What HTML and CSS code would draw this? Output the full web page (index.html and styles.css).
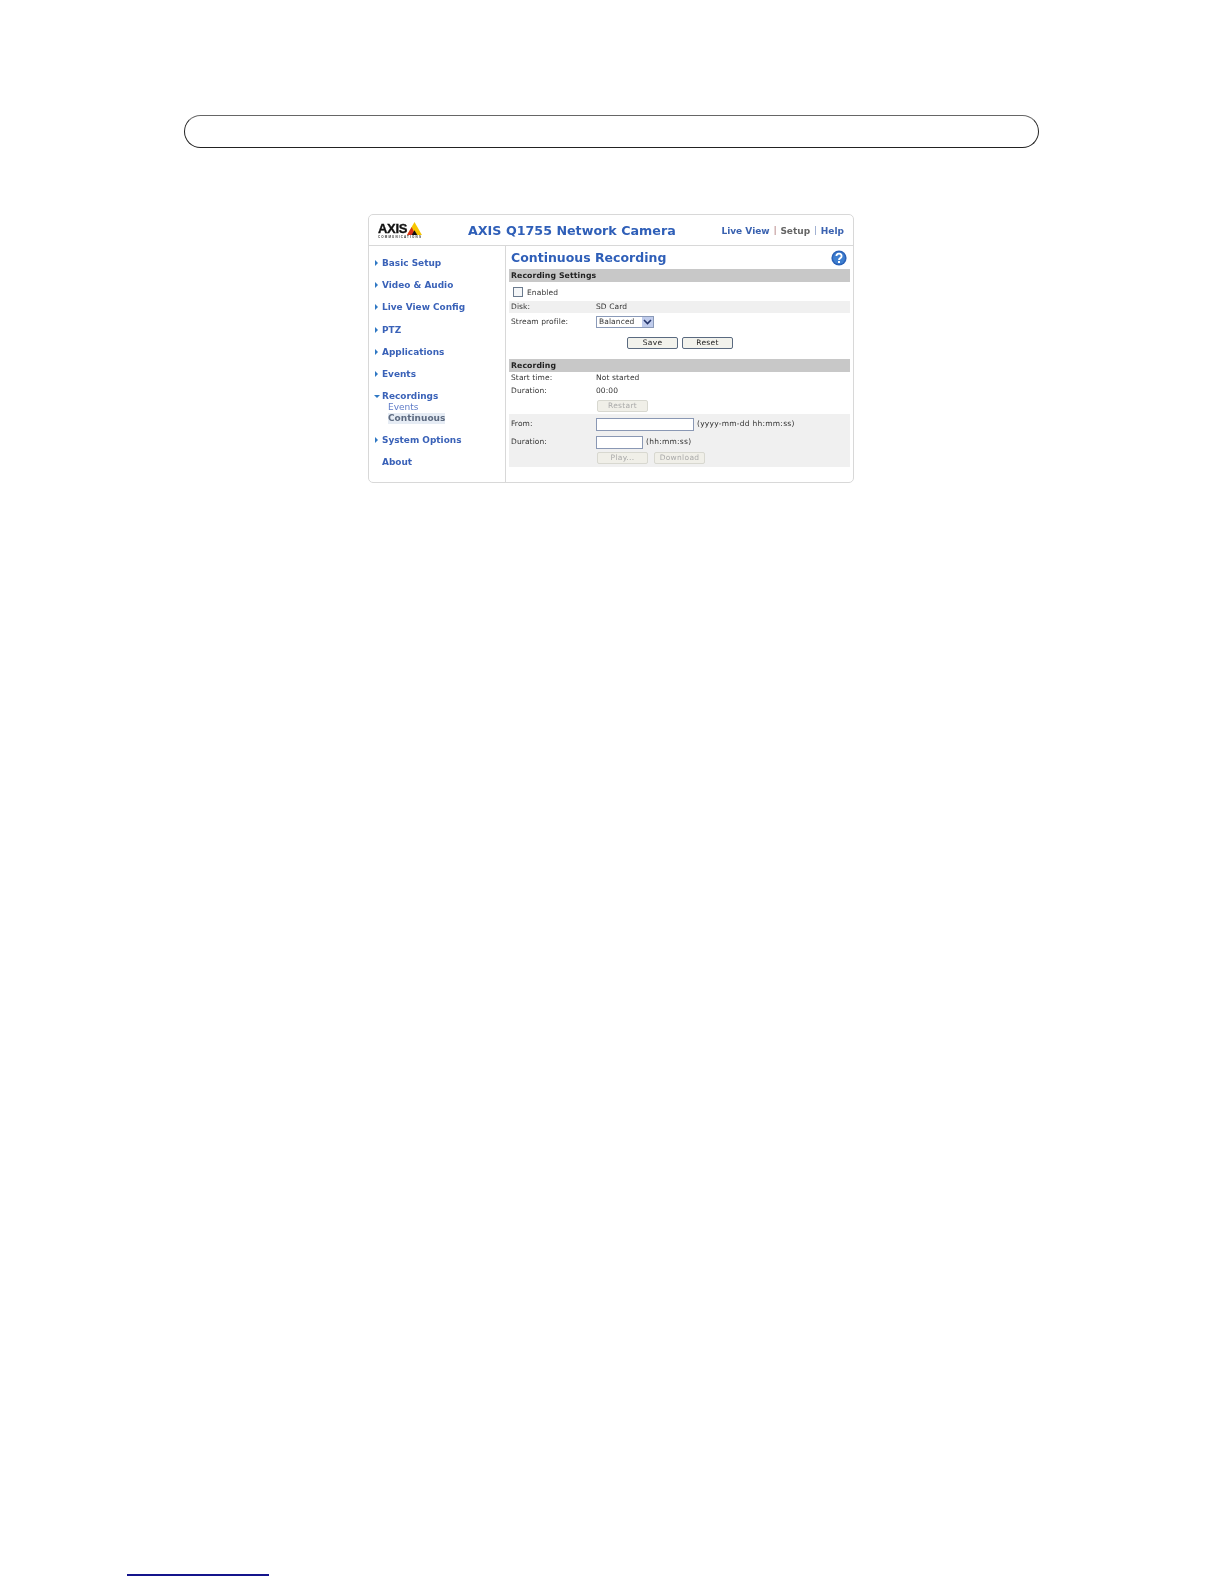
FILE: index.html
```html
<!DOCTYPE html>
<html lang="en">
<head>
<meta charset="utf-8">
<title>AXIS Q1755 Network Camera</title>
<link rel="stylesheet" href="styles.css">
</head>
<body>
<div class="pill"></div>
<div class="frame">
  <header class="top">
    <div class="logo">
      <div class="logo-main"><span class="axis">AXIS</span>
        <svg class="tri" viewBox="0 0 16 14" width="15" height="13"><polygon points="8,0 16,14 0,14" fill="#f7c600"/><polygon points="5,5.5 9,14 0,14" fill="#d8301c"/><polygon points="8,9 11,14 5,14" fill="#111"/></svg>
      </div>
      <div class="comm">COMMUNICATIONS</div>
    </div>
    <h1 class="product">AXIS Q1755 Network Camera</h1>
    <nav class="toplinks"><a class="tl">Live View</a><span class="sep">|</span><a class="tl cur">Setup</a><span class="sep">|</span><a class="tl">Help</a></nav>
  </header>
  <div class="body">
    <aside class="side">
      <div class="item"><i class="ar"></i>Basic Setup</div>
      <div class="item"><i class="ar"></i>Video &amp; Audio</div>
      <div class="item"><i class="ar"></i>Live View Config</div>
      <div class="item"><i class="ar"></i>PTZ</div>
      <div class="item"><i class="ar"></i>Applications</div>
      <div class="item"><i class="ar"></i>Events</div>
      <div class="item open"><i class="ar down"></i>Recordings</div>
      <div class="sub">Events</div>
      <div class="sub on"><span>Continuous</span></div>
      <div class="item after"><i class="ar"></i>System Options</div>
      <div class="item"><i class="ar none"></i>About</div>
    </aside>
    <main class="main">
      <div class="title-row">
        <h2 class="title">Continuous Recording</h2>
        <svg class="help" viewBox="0 0 16 16" width="16" height="16"><circle cx="8" cy="8" r="7.6" fill="#2a62b8"/><circle cx="8" cy="8" r="6" fill="#3f7fd0"/><path d="M5.4 6a2.6 2.4 0 1 1 3.9 2.1c-.9.6-1.3 1-1.3 2" fill="none" stroke="#fff" stroke-width="1.9"/><rect x="7" y="11" width="2" height="2" fill="#fff"/></svg>
      </div>
      <div class="bar">Recording Settings</div>
      <div class="row check"><span class="box"></span><span>Enabled</span></div>
      <div class="row shade"><span class="lab">Disk:</span><span>SD Card</span></div>
      <div class="row sel"><span class="lab">Stream profile:</span>
        <span class="select"><span class="sv">Balanced</span><span class="sa"><svg viewBox="0 0 9 6" width="9" height="6"><path d="M1 1l3.5 3.5L8 1" fill="none" stroke="#24346a" stroke-width="1.6"/></svg></span></span></div>
      <div class="btns"><span class="btn">Save</span><span class="btn">Reset</span></div>
      <div class="bar second">Recording</div>
      <div class="row t"><span class="lab">Start time:</span><span>Not started</span></div>
      <div class="row t"><span class="lab">Duration:</span><span>00:00</span></div>
      <div class="row act"><span class="lab"></span><span class="btn off">Restart</span></div>
      <div class="panel">
        <div class="row f1"><span class="lab">From:</span><span class="inp long"></span><span class="hint">(yyyy-mm-dd hh:mm:ss)</span></div>
        <div class="row f2"><span class="lab">Duration:</span><span class="inp short"></span><span class="hint">(hh:mm:ss)</span></div>
        <div class="row f3"><span class="lab"></span><span class="btn off">Play...</span><span class="btn off">Download</span></div>
      </div>
    </main>
  </div>
</div>
<div class="foot"></div>
</body>
</html>
```
FILE: styles.css
```css
html, body { margin: 0; padding: 0; background: #fff; }
body { width: 1224px; height: 1584px; overflow: hidden; font-family: "DejaVu Sans", Verdana, sans-serif; color: #333; }
.pill { box-sizing: border-box; width: 855px; height: 33px; margin: 115px 0 0 184px; border: 1px solid #222; border-top-color: #666; border-radius: 17px; }
.frame { box-sizing: border-box; width: 486px; height: 269px; margin: 66px 0 0 368px; border: 1px solid #d8d8d8; border-radius: 5px; filter: blur(.35px); }
.top { display: flex; align-items: center; height: 30px; border-bottom: 1px solid #d8d8d8; }
.logo { width: 90px; padding-left: 9px; flex: none; margin-top: 1px; }
.logo-main { display: flex; align-items: flex-end; height: 13px; }
.axis { font: bold 13px/13px "Liberation Sans", Arial, sans-serif; color: #111; letter-spacing: -.3px; -webkit-text-stroke: .35px #111; }
.tri { margin-top: -3px; }
.comm { font: bold 3px/3px "Liberation Sans", Arial, sans-serif; color: #333; letter-spacing: 1.15px; margin-top: 1px; white-space: nowrap; }
.product { margin: 2px 0 0; font: bold 12.7px/16px "DejaVu Sans", Verdana, sans-serif; color: #2f5fb8; white-space: nowrap; }
.toplinks { margin: 1px 9px 0 auto; display: flex; align-items: center; font: bold 9px/12px "DejaVu Sans", Verdana, sans-serif; color: #3a62b0; }
.cur { color: #666; }
.sep { font-weight: normal; margin: 0 4px; color: #a06060; font-size: 8px; }
.sep + .cur + .sep { color: #7a90c0; }
.body { display: flex; height: 237px; }
.side { box-sizing: border-box; width: 137px; flex: none; border-right: 1px solid #d8d8d8; padding-top: 6px; }
.item { display: flex; align-items: center; height: 22.2px; padding-left: 6px; font: bold 8.95px/22px "DejaVu Sans", Verdana, sans-serif; color: #3a62b8; white-space: nowrap; }
.item.open { height: 22px; margin-bottom: -5.5px; }
.item.after { margin-top: 5.5px; }
.ar { flex: none; width: 0; height: 0; border-left: 3px solid #2f78c4; border-top: 3px solid transparent; border-bottom: 3px solid transparent; margin-right: 4px; }
.ar.down { border-left: 3px solid transparent; border-right: 3px solid transparent; border-top: 3px solid #2f78c4; border-bottom: 0; margin: 0 2px 0 -1px; }
.ar.none { border-color: transparent; }
.sub { height: 11px; padding-left: 19px; font: 9px/11px "DejaVu Sans", Verdana, sans-serif; color: #5f7cc8; }
.sub.on { font-weight: bold; color: #5c6a80; }
.sub.on span { display: inline-block; background: #e6ecf4; }
.main { flex: 1; padding: 0 3px; font: 7.5px/12px "DejaVu Sans", Verdana, sans-serif; letter-spacing: .1px; min-width: 0; }
.title-row { display: flex; align-items: center; justify-content: space-between; height: 23px; padding: 0 3px 0 2px; }
.title { margin: 0; font: bold 12.5px/20px "DejaVu Sans", Verdana, sans-serif; letter-spacing: 0; color: #2f5fb8; white-space: nowrap; }
.bar { height: 13px; background: #c8c8c8; padding-left: 2px; font: bold 7.75px/13px "DejaVu Sans", Verdana, sans-serif; color: #222; }
.bar.second { margin-top: 9px; }
.row { display: flex; align-items: center; padding-left: 2px; }
.lab { flex: none; width: 85px; }
.check { box-sizing: border-box; height: 19px; padding: 3px 0 0 4px; }
.box { box-sizing: border-box; width: 10px; height: 10px; border: 1px solid #6a7a8e; background: #f4f6f8; margin-right: 4px; margin-top: -3px; }
.shade { height: 12px; background: #f0f0f0; }
.sel { height: 18px; }
.select { box-sizing: border-box; display: flex; width: 58px; height: 12px; border: 1px solid #8a9ab8; background: #fff; align-items: center; }
.sv { flex: 1; padding-left: 2px; }
.sa { width: 11px; height: 10px; background: #c0ccec; display: flex; align-items: center; justify-content: center; }
.btns { display: flex; gap: 4px; padding-left: 118px; margin-top: 6px; height: 13px; }
.btn { box-sizing: border-box; display: flex; align-items: center; justify-content: center; width: 51px; height: 12px; border: 1px solid #5a6a80; border-radius: 2px; background: #f2f2ec; color: #222; letter-spacing: .3px; }
.btn.off { border-color: #d8d8d0; color: #aaa; background: #f0efe8; margin: 0 5px 0 1px; }
.t { height: 12.5px; }
.act { height: 17px; }
.panel { box-sizing: border-box; background: #f0f0f0; height: 53px; padding-top: 1px; }
.f1, .f2 { height: 18px; }
.f3 { height: 14px; }
.inp { box-sizing: border-box; height: 13px; border: 1px solid #8a98b4; background: #fff; margin-right: 3px; }
.inp.long { width: 98px; }
.inp.short { width: 47px; }
.hint { letter-spacing: .25px; }
.foot { width: 142px; height: 2px; background: #14148c; margin: 1091px 0 0 127px; }
```
